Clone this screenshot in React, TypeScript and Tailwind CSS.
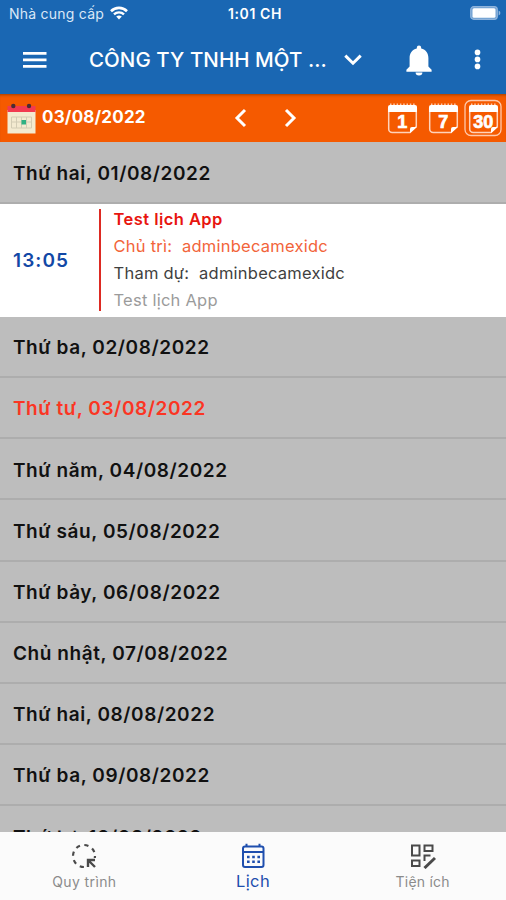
type Day = {
  label: string
  today?: boolean
}

const days: Day[] = [
  { label: 'Thứ ba, 02/08/2022' },
  { label: 'Thứ tư, 03/08/2022', today: true },
  { label: 'Thứ năm, 04/08/2022' },
  { label: 'Thứ sáu, 05/08/2022' },
  { label: 'Thứ bảy, 06/08/2022' },
  { label: 'Chủ nhật, 07/08/2022' },
  { label: 'Thứ hai, 08/08/2022' },
  { label: 'Thứ ba, 09/08/2022' },
  { label: 'Thứ tư, 10/08/2022' },
]

function StatusBar() {
  return (
    <div className="flex h-[26px] items-center pl-[9px] pr-[5px] text-white">
      <div className="flex flex-1 items-center gap-[6px]">
        <span className="text-[14px] tracking-[0.24px] text-[#dbe8f7]">Nhà cung cấp</span>
        <svg width="18" height="14" viewBox="0 0 18 14" fill="none" stroke="currentColor">
          <path d="M1 5.2C5.5 0.8 12.5 0.8 17 5.2" strokeWidth="2.6" />
          <path d="M4 8.4C6.8 5.7 11.2 5.7 14 8.4" strokeWidth="2.4" />
          <path d="M9 13.4L6.2 10.6Q9 8.4 11.8 10.6Z" fill="currentColor" stroke="none" />
        </svg>
      </div>
      <span className="text-[14px] font-semibold tracking-[0.6px]">1:01 CH</span>
      <div className="flex flex-1 justify-end">
        <svg width="31" height="14" viewBox="0 0 31 14">
          <rect x="0.7" y="0.7" width="26.6" height="12.6" rx="3" fill="#6fa0d2" stroke="#8fb4dc" strokeWidth="1.2" />
          <rect x="2.5" y="2.3" width="23" height="9.4" rx="1.5" fill="#fff" />
          <path d="M28.6 4.5Q30.4 5.4 30.4 7T28.6 9.5Z" fill="#8fb4dc" />
        </svg>
      </div>
    </div>
  )
}

function AppBar() {
  return (
    <header className="flex h-[68px] items-center pl-[23px] text-white">
      <svg width="24" height="17" viewBox="0 0 24 17" fill="currentColor">
        <path d="M0 0h23.5v2.8H0zM0 6.500h23.5v2.8H0zM0 13h23.5v2.8H0z" />
      </svg>
      <h1 className="ml-[42px] w-[238px] whitespace-nowrap text-[20.5px] font-medium tracking-[0.05px]">
        CÔNG TY TNHH MỘT ...
      </h1>
      <svg className="ml-[17px]" width="18" height="12" viewBox="0 0 18 12" fill="none" stroke="currentColor" strokeWidth="3">
        <path d="M1.3 1.6L9 9.2L16.7 1.6" />
      </svg>
      <svg className="ml-[44px]" width="26" height="31" viewBox="0 0 26 31" fill="currentColor">
        <path d="M13 0.5a2.2 2.2 0 0 1 2.2 2.2v0.9C20 4.8 22.4 8.5 22.4 13v8.5l3.2 3.2v2H0.4v-2l3.2-3.2V13C3.6 8.5 6 4.8 10.8 3.6V2.7A2.2 2.2 0 0 1 13 0.5z" />
        <path d="M9.6 27.5h6.8a3.4 3 0 0 1-6.8 0z" />
      </svg>
      <svg className="ml-[42px]" width="7" height="22" viewBox="0 0 7 22" fill="currentColor">
        <circle cx="3.5" cy="3.4" r="2.8" />
        <circle cx="3.5" cy="10.4" r="2.8" />
        <circle cx="3.5" cy="17.4" r="2.8" />
      </svg>
    </header>
  )
}

function RangeIcon({ value, active = false }: { value: string; active?: boolean }) {
  return (
    <svg width="40" height="40" viewBox="0 0 40 40">
      {active && (
        <rect x="2" y="2.5" width="36" height="35" rx="6" fill="none" stroke="#ffc9ab" strokeWidth="1.3" />
      )}
      <path
        d="M6.7 10V31a3.5 3.5 0 0 0 3.5 3.5H28L34.3 28.5V10"
        fill="none"
        stroke="#ffd3bb"
        strokeWidth="1.5"
      />
      <path d="M6 9a2 2 0 0 1 2-2h25a2 2 0 0 1 2 2V14H6z" fill="#fff" />
      <path d="M28 35v-4a2 2 0 0 1 2-2h5z" fill="#fff" />
      <path d="M8 6.3h25" stroke="#ffc9ab" strokeWidth="1.4" strokeDasharray="1.5 1.8" />
      <text
        x="20.3"
        y="29.5"
        textAnchor="middle"
        fill="#fff"
        className="font-['Liberation_Sans'] text-[18px] font-bold"
        stroke="#fff"
        strokeWidth="0.7"
      >
        {value}
      </text>
    </svg>
  )
}

function DateBar() {
  return (
    <div className="flex h-[48px] items-center bg-[#f55a00] pl-[7px] text-white shadow-[inset_0_3px_3px_-2px_rgba(90,40,0,0.55)]">
      <svg width="29" height="31" viewBox="0 0 29 31">
        <rect x="0.5" y="7" width="28" height="23.5" fill="#f3ead0" />
        <rect x="0.5" y="3" width="28" height="6" fill="#f23a50" />
        <circle cx="6.3" cy="3" r="2.2" fill="#4b2b33" />
        <circle cx="22" cy="3" r="2.2" fill="#4b2b33" />
        <path
          d="M4.5 14h20M4.5 19h20M4.5 25h20M4.5 14v11M9.5 14v11M14.5 14v11M19.5 14v11M24.5 14v11"
          stroke="#d3ccb4"
          fill="none"
        />
        <rect x="14.5" y="17" width="4.5" height="4.5" fill="#2fb183" />
      </svg>
      <span className="ml-[6px] w-[104px] text-[17px] font-bold tracking-[0.2px]">03/08/2022</span>
      <svg className="ml-[87px]" width="14" height="20" viewBox="0 0 14 20" fill="none" stroke="currentColor" strokeWidth="3">
        <path d="M12 2L4 10L12 18" />
      </svg>
      <svg className="ml-[37px]" width="14" height="20" viewBox="0 0 14 20" fill="none" stroke="currentColor" strokeWidth="3">
        <path d="M2 2L10 10L2 18" />
      </svg>
      <div className="ml-auto flex items-center gap-[0.5px] pr-[3px]">
        <RangeIcon value="1" />
        <RangeIcon value="7" />
        <RangeIcon value="30" active />
      </div>
    </div>
  )
}

function DayRow({ label, today }: Day) {
  return (
    <div
      className={`flex h-[61.2px] shrink-0 items-center border-b-2 border-[#adadad] pl-[13px] pt-[4px] text-[19px] font-semibold tracking-[0.58px] ${
        today ? 'text-[#fb3523]' : 'text-[#111111]'
      }`}
    >
      {label}
    </div>
  )
}

function EventCard() {
  return (
    <div className="flex h-[113px] shrink-0 items-center bg-white">
      <span className="w-[99px] pl-[13px] pt-[1px] text-[19px] font-semibold tracking-[1.1px] text-[#1248a6]">
        13:05
      </span>
      <div className="h-[102px] w-[2px] bg-[#dd2a22]" />
      <div className="ml-[12.5px] text-[16.5px] leading-[27px] tracking-[0.24px]">
        <p className="font-semibold tracking-[0.45px] text-[#e8150f]">Test lịch App</p>
        <p className="text-[#f2643a]">Chủ trì:&nbsp; adminbecamexidc</p>
        <p className="text-[#3f3f3f]">Tham dự:&nbsp; adminbecamexidc</p>
        <p className="text-[#9b9b9b]">Test lịch App</p>
      </div>
    </div>
  )
}

function BottomNav() {
  return (
    <nav className="grid h-[68px] shrink-0 grid-cols-3 bg-[#fbfbfb] text-[#8b8b8b]">
      <div className="flex flex-col items-center pt-[11px]">
        <svg width="26" height="26" viewBox="0 0 26 26" fill="none" stroke="#4a4a4a">
          <circle cx="13" cy="13" r="11" strokeWidth="2.2" strokeDasharray="4.2 4.44" />
          <path d="M15 15h11v11H15z" fill="#fbfbfb" stroke="none" />
          <path d="M17 24V17H24M17.5 17.5L24 24" strokeWidth="2.4" />
        </svg>
        <span className="mt-[3px] text-[14px] leading-[20px] tracking-[0.4px]">Quy trình</span>
      </div>
      <div className="flex flex-col items-center pt-[11px] text-[#1f4fae]">
        <svg width="24" height="26" viewBox="0 0 24 26" fill="none" stroke="currentColor">
          <rect x="2" y="3.5" width="20.5" height="20.5" rx="2" strokeWidth="2" />
          <path d="M2 9h20.5M5.5 0.8v3M18.5 0.8v3" strokeWidth="2" />
          <path d="M6 14h13.5M6 18.8h13.5" strokeWidth="2.4" strokeDasharray="2.6 2.6" />
        </svg>
        <span className="mt-[1px] text-[16.5px] leading-[22px] tracking-[0.4px]">Lịch</span>
      </div>
      <div className="flex flex-col items-center pt-[11px]">
        <svg className="ml-[2px]" width="26" height="26" viewBox="0 0 26 26" fill="none" stroke="#4a4a4a" strokeWidth="2">
          <path d="M2 2.5h7.5v10H2zM14.5 2.5h8v5.500h-8zM2 17.500h7.500v5.500H2z" />
          <path d="M14.500 18v-5.500h6" />
          <path d="M14.500 25L25 15" strokeWidth="3" />
        </svg>
        <span className="ml-[2px] mt-[3px] text-[14px] leading-[20px] tracking-[0.24px]">Tiện ích</span>
      </div>
    </nav>
  )
}

export default function App() {
  return (
    <div className="flex h-[900px] w-[506px] flex-col overflow-hidden bg-[#bdbdbd] font-['Inter','Liberation_Sans',sans-serif]">
      <div className="shrink-0 bg-[#1a67b3]">
        <StatusBar />
        <AppBar />
      </div>
      <DateBar />
      <main className="flex min-h-0 flex-1 flex-col overflow-hidden pt-[0.6px]">
        <DayRow label="Thứ hai, 01/08/2022" />
        <EventCard />
        {days.map((day) => (
          <DayRow key={day.label} {...day} />
        ))}
      </main>
      <BottomNav />
    </div>
  )
}
